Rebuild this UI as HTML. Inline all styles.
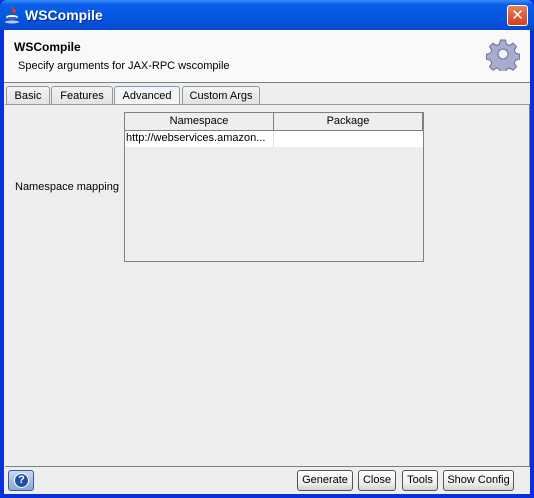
<!DOCTYPE html>
<html><head><style>
*{box-sizing:border-box;margin:0;padding:0}
body{width:534px;height:498px;position:relative;overflow:hidden;background:#0831d9;font-family:"Liberation Sans","DejaVu Sans",sans-serif;font-size:11px;color:#000}
.abs{position:absolute}
#title{left:0;top:0;width:534px;height:30px;background:linear-gradient(#3a8cf8 0,#0a5fe8 15%,#0456e0 60%,#0848d0 100%);border-radius:7px 7px 0 0}
#title .t{left:25px;top:7px;color:#fff;font-weight:bold;font-size:14px;text-shadow:1px 1px #0a2a8a}
#close{left:507px;top:5px;width:21px;height:21px;border:1px solid #fff;border-radius:3px;background:linear-gradient(#e8805f,#d0401a);color:#fff;font-weight:bold;font-size:15px;text-align:center;line-height:19px}
#win{left:4px;top:30px;width:526px;height:464px;background:#eeeeee}
#hdr{left:0;top:0;width:526px;height:53px;background:#f9f9f9;border-bottom:1px solid #808080}
.tab{top:56px;height:19px;border:1px solid #919b9c;border-bottom:none;border-radius:3px 3px 0 0;background:linear-gradient(#f4f4f4,#e2e2e2);padding:3px 0 0;text-align:center}
#panel{left:1px;top:74px;width:525px;height:363px;border-top:1px solid #919b9c;border-bottom:1px solid #808080;border-right:1px solid #808080}
.btn{top:440px;height:21px;border:1px solid #555;border-radius:3px;background:linear-gradient(#fff,#ececec 70%,#d6d0c5);text-align:center;line-height:19px;font-size:11px}
</style></head><body>
<div id="title" class="abs">
 <svg class="abs" style="left:5px;top:6px" width="16" height="18" viewBox="0 0 16 18"><path d="M8 1c-2 2 2 3 0 6M10 3c-1 2 1 2 0 4" stroke="#e04010" fill="none" stroke-width="1.5"/><ellipse cx="7" cy="11" rx="6" ry="2" fill="#fff"/><path d="M2 11q5 6 10 0" fill="#5060c0"/><ellipse cx="7" cy="16" rx="7" ry="1.5" fill="#c0c8f0"/></svg>
 <div class="abs t">WSCompile</div>
 <div id="close" class="abs">✕</div>
</div>
<div id="win" class="abs">
 <div id="hdr" class="abs">
  <div class="abs" style="left:10px;top:10px;font-weight:bold;font-size:12px">WSCompile</div>
  <div class="abs" style="left:14px;top:30px">Specify arguments for JAX-RPC wscompile</div>
  <svg class="abs" style="left:482px;top:7px" width="34" height="34" viewBox="-17 -17 34 34">
   <g fill="#a8acd0" stroke="#6a6e98" stroke-width="1">
   <path d="M-2.5,-14h5l1,4 3,1.5 3.5,-2.3 3.5,3.5 -2.3,3.5 1.5,3 4,1v5l-4,1 -1.5,3 2.3,3.5 -3.5,3.5 -3.5,-2.3 -3,1.5 -1,4h-5l-1,-4 -3,-1.5 -3.5,2.3 -3.5,-3.5 2.3,-3.5 -1.5,-3 -4,-1v-5l4,-1 1.5,-3 -2.3,-3.5 3.5,-3.5 3.5,2.3 3,-1.5z"/></g>
   <circle r="5" fill="#f4f4f8" stroke="#6a6e98"/>
  </svg>
 </div>
 <div class="abs tab" style="left:2px;width:44px">Basic</div>
 <div class="abs tab" style="left:47px;width:62px">Features</div>
 <div class="abs tab" style="left:110px;width:66px;border-color:#7f9db9;background:#f4f4f4">Advanced</div>
 <div class="abs tab" style="left:178px;width:78px">Custom Args</div>
 <div id="panel" class="abs"></div>
 <div class="abs" style="left:11px;top:151px">Namespace mapping</div>
 <div class="abs" style="left:120px;top:82px;width:300px;height:150px;border:1px solid #808080;background:#eeeeee">
  <div class="abs" style="left:0;top:0;width:149px;height:18px;border-right:1px solid #808080;border-bottom:1px solid #808080;text-align:center;line-height:17px">Namespace</div>
  <div class="abs" style="left:149px;top:0;width:149px;height:18px;border-bottom:1px solid #808080;border-right:1px solid #808080;text-align:center;line-height:17px">Package</div>
  <div class="abs" style="left:0;top:18px;width:298px;height:16px;background:#fff"></div>
  <div class="abs" style="left:148px;top:18px;width:1px;height:16px;background:#e0e0e0"></div>
  <div class="abs" style="left:1px;top:19px">http://webservices.amazon...</div>
 </div>
 <div class="abs" style="left:4px;top:440px;width:26px;height:21px;border:1px solid #3a5a9a;border-radius:3px;background:linear-gradient(#c8d8f0,#8aa6d8)">
  <div class="abs" style="left:5px;top:2px;width:15px;height:15px;border-radius:50%;background:#2050a0;border:1px solid #fff;color:#fff;font-weight:bold;text-align:center;line-height:13px;font-size:11px">?</div>
 </div>
 <div class="abs btn" style="left:293px;width:56px">Generate</div>
 <div class="abs btn" style="left:354px;width:38px">Close</div>
 <div class="abs btn" style="left:398px;width:36px">Tools</div>
 <div class="abs btn" style="left:439px;width:71px">Show Config</div>
</div>
</body></html>
